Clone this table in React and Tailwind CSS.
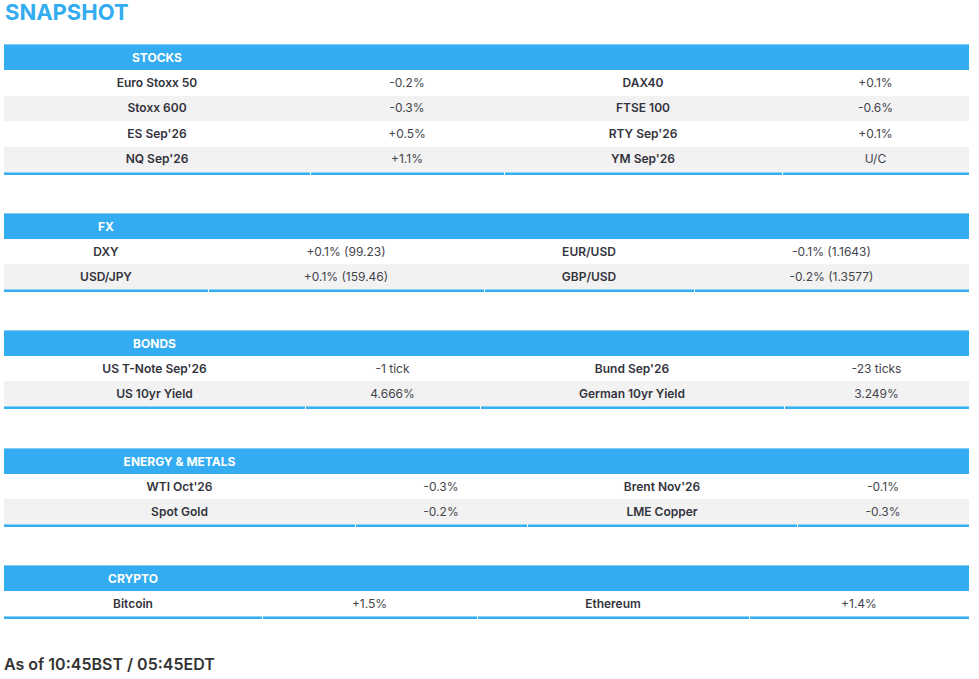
import React from 'react';

const SECTIONS = [
    {
        title: 'STOCKS',
        cols: 'grid-cols-[306px_194px_278px_187px]',
        rowH: 'h-[25.5px]',
        gap: '',
        rows: [
            ['Euro Stoxx 50', '-0.2%', 'DAX40', '+0.1%'],
            ['Stoxx 600', '-0.3%', 'FTSE 100', '-0.6%'],
            ["ES Sep'26", '+0.5%', "RTY Sep'26", '+0.1%'],
            ["NQ Sep'26", '+1.1%', "YM Sep'26", 'U/C'],
        ],
    },
    {
        title: 'FX',
        cols: 'grid-cols-[204px_276px_210px_275px]',
        rowH: 'h-[25px]',
        gap: 'mt-[38px]',
        rows: [
            ['DXY', '+0.1% (99.23)', 'EUR/USD', '-0.1% (1.1643)'],
            ['USD/JPY', '+0.1% (159.46)', 'GBP/USD', '-0.2% (1.3577)'],
        ],
    },
    {
        title: 'BONDS',
        cols: 'grid-cols-[301px_175px_304px_185px]',
        rowH: 'h-[25px]',
        gap: 'mt-[38px]',
        rows: [
            ["US T-Note Sep'26", '-1 tick', "Bund Sep'26", '-23 ticks'],
            ['US 10yr Yield', '4.666%', 'German 10yr Yield', '3.249%'],
        ],
    },
    {
        title: 'ENERGY & METALS',
        cols: 'grid-cols-[351px_172px_270px_172px]',
        rowH: 'h-[25px]',
        gap: 'mt-[39px]',
        rows: [
            ["WTI Oct'26", '-0.3%', "Brent Nov'26", '-0.1%'],
            ['Spot Gold', '-0.2%', 'LME Copper', '-0.3%'],
        ],
    },
    {
        title: 'CRYPTO',
        cols: 'grid-cols-[258px_215px_272px_220px]',
        rowH: 'h-[25px]',
        gap: 'mt-[38px]',
        rows: [
            ['Bitcoin', '+1.5%', 'Ethereum', '+1.4%'],
        ],
    },
];

const Section = ({ title, cols, rowH, gap, rows }) => (
    <div className={`w-[965px] ${gap}`}>
        {/* header row - title sits in first column only */}
        <div className={`grid ${cols} h-[26px] bg-[#33acf1] border-t border-[#86cdf6]`}>
            <div className="flex items-center justify-center text-white font-bold text-[12px]">{title}</div>
            <div />
            <div />
            <div />
        </div>

        {rows.map((r, idx) => (
            <div key={idx} className={`grid ${cols} ${rowH} ${idx % 2 === 1 ? 'bg-[#f2f2f2]' : 'bg-white'}`}>
                <div className="flex items-center justify-center font-semibold text-[12px] text-[#33333d]">{r[0]}</div>
                <div className="flex items-center justify-center text-[12px] text-[#44444c]">{r[1]}</div>
                <div className="flex items-center justify-center font-semibold text-[12px] text-[#33333d]">{r[2]}</div>
                <div className="flex items-center justify-center text-[12px] text-[#44444c]">{r[3]}</div>
            </div>
        ))}

        {/* bottom rule, split per cell */}
        <div className={`grid ${cols} h-[3px]`}>
            <div className="bg-[#33acf1] border-t border-[#8fd2f7]" />
            <div className="ml-px bg-[#33acf1] border-t border-[#8fd2f7]" />
            <div className="ml-px bg-[#33acf1] border-t border-[#8fd2f7]" />
            <div className="ml-px bg-[#33acf1] border-t border-[#8fd2f7]" />
        </div>
    </div>
);

export default function App() {
    return (
        <div className="w-[979px] min-h-[679px] bg-white px-[4px] font-['Inter','Liberation_Sans',sans-serif]">
            <h1 className="text-[22px] leading-[24px] font-bold text-[#33acf1] pl-px mb-[20px]">SNAPSHOT</h1>

            <div className="flex flex-col">
                {SECTIONS.map((s) => (
                    <Section key={s.title} {...s} />
                ))}
            </div>

            <div className="mt-[33px] text-[16px] leading-[24px] font-semibold text-[#333333]">
                As of 10:45BST / 05:45EDT
            </div>
        </div>
    );
}
